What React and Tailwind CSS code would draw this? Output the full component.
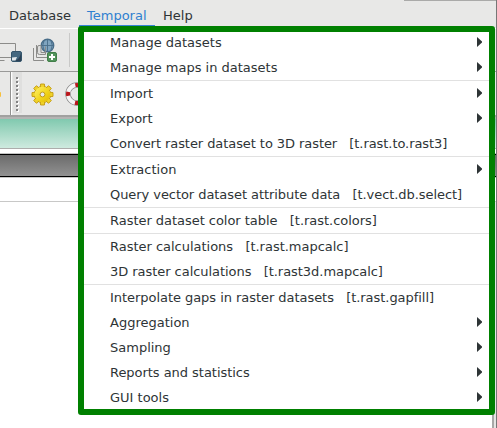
import React from "react";

const groups = [
  [
    { label: "Manage datasets", sub: true },
    { label: "Manage maps in datasets", sub: true },
  ],
  [
    { label: "Import", sub: true },
    { label: "Export", sub: true },
    { label: "Convert raster dataset to 3D raster   [t.rast.to.rast3]", tracking: "tracking-[-0.07px]" },
  ],
  [
    { label: "Extraction", sub: true },
    { label: "Query vector dataset attribute data   [t.vect.db.select]", tracking: "tracking-[-0.062px]" },
  ],
  [{ label: "Raster dataset color table   [t.rast.colors]", tracking: "tracking-[-0.035px]" }],
  [
    { label: "Raster calculations   [t.rast.mapcalc]", tracking: "tracking-[-0.02px]" },
    { label: "3D raster calculations   [t.rast3d.mapcalc]", tracking: "tracking-[-0.045px]" },
  ],
  [
    { label: "Interpolate gaps in raster datasets   [t.rast.gapfill]", tracking: "tracking-[-0.045px]" },
    { label: "Aggregation", sub: true },
    { label: "Sampling", sub: true },
    { label: "Reports and statistics", sub: true, tracking: "tracking-[-0.04px]" },
    { label: "GUI tools", sub: true },
  ],
];

function MenuItem({ label, sub, tracking = "" }) {
  return (
    <div className="flex h-[25px] items-center justify-between pl-[26px] pr-[7px]">
      <span className={`whitespace-pre ${tracking}`}>{label}</span>
      {sub && (
        <svg className="-mt-px" width="5" height="10" viewBox="0 0 5 10" fill="#2e3436">
          <path d="M0 0L5 4.5V5.5L0 10Z" />
        </svg>
      )}
    </div>
  );
}

function TemporalMenu() {
  return (
    <div className="absolute left-[78px] top-[26px] h-[389px] w-[417px] overflow-hidden rounded-[3px] border-[6px] border-[#008000] bg-white">
      <div className="-mt-0.5">
        {groups.map((items, i) => (
          <div key={i} className={i ? "border-t border-[#e1e1e1]" : ""}>
            {items.map((item) => (
              <MenuItem key={item.label} {...item} />
            ))}
          </div>
        ))}
      </div>
    </div>
  );
}

function NewLayerIcon() {
  return (
    <svg className="shrink-0" width="23" height="25" viewBox="0 0 23 25">
      <path d="M0 5.5H15.5V13M0 19.5H11M0 22.5H4.5" fill="none" stroke="#8c8c8a" />
      <rect x="11.5" y="13.5" width="10" height="10" rx="1.5" fill="#456880" stroke="#34546b" />
      <path d="M13 23C18 23 20 19 21 15V23Z" fill="#2c4155" />
      <path d="M12 19.5L17 19L15.5 22.5H12Z" fill="#e4e9ec" />
    </svg>
  );
}

function WebLayerIcon() {
  return (
    <svg className="shrink-0" width="25" height="25" viewBox="0 0 25 25">
      <path d="M0.5 10V22.5H11M3.5 7V19.5H14" fill="none" stroke="#8c8c8a" />
      <circle cx="14.5" cy="7.5" r="6.2" fill="#80a5c0" stroke="#486d89" strokeWidth="1.4" />
      <path d="M14.5 1V14M8 7.5H21M11 3Q8.5 7 11 12M18 3Q20.5 7 18 12" fill="none" stroke="#486d89" strokeWidth="0.9" />
      <path d="M12.5 8.5V16.5H6.5Q4.5 16.5 4.5 14.5V9Q4.5 7.5 6 7.5H8V14.5H12.5" fill="#dededd" stroke="#8c8c8a" />
      <rect x="14.5" y="14.5" width="9" height="9" rx="1.5" fill="#51935b" stroke="#417e48" />
      <path d="M19 16V22M16 19H22" stroke="#fff" strokeWidth="2" />
    </svg>
  );
}

function GearIcon() {
  const teeth = [0, 45, 90, 135, 180, 225, 270, 315];
  return (
    <svg className="shrink-0" width="23" height="23" viewBox="0 0 23 23">
      <defs>
        <linearGradient id="gold" x1="0" y1="0" x2="1" y2="1">
          <stop offset="0" stopColor="#fff16b" />
          <stop offset="0.55" stopColor="#f2d51d" />
          <stop offset="1" stopColor="#e0b800" />
        </linearGradient>
      </defs>
      <circle cx="11.5" cy="11.5" r="8.2" fill="none" stroke="#c39a10" />
      {teeth.map((a) => (
        <path key={a} d="M9.2 5L9.6 1H13.4L13.8 5Z" fill="#efd22a" stroke="#c39a10" strokeWidth="0.9" transform={`rotate(${a} 11.5 11.5)`} />
      ))}
      <circle cx="11.5" cy="11.5" r="7.8" fill="url(#gold)" />
      <circle cx="11.5" cy="11.5" r="2.4" fill="#e8e8e7" stroke="#b58a08" strokeWidth="0.8" />
    </svg>
  );
}

function HelpRingIcon() {
  return (
    <svg className="shrink-0" width="24" height="24" viewBox="0 0 24 24">
      <circle cx="12" cy="12" r="9" fill="none" stroke="#888" strokeWidth="5.4" />
      <circle cx="12" cy="12" r="9" fill="none" stroke="#f5f5f5" strokeWidth="4" />
      <circle cx="12" cy="12" r="9" fill="none" stroke="#b9161c" strokeWidth="4" strokeDasharray="4 10.137" strokeDashoffset="2" />
    </svg>
  );
}

function Grip() {
  return (
    <svg className="shrink-0" width="9" height="41" viewBox="0 0 9 41">
      <rect width="9" height="41" fill="#dfdfde" />
      {[5, 9, 13, 17, 21, 25, 29, 33, 37].map((y) => (
        <g key={y}>
          <rect x="4" y={y + 1} width="2" height="2" fill="#fff" />
          <rect x="3" y={y} width="2" height="2" fill="#828282" />
        </g>
      ))}
    </svg>
  );
}

export default function App() {
  return (
    <div className="relative flex h-[428px] w-[497px] overflow-hidden bg-white font-['DejaVu_Sans',sans-serif] text-[13px] leading-[16px] text-[#2e3436]">
      <div className="flex w-[496px] flex-col">
        <header className="flex h-[29px] shrink-0 border-b border-white bg-[#e8e8e7]">
          <span className="w-[79px] pl-[9px] pt-[8px]">Database</span>
          <span className="h-[27px] w-[76px] border-b-2 border-[#3584d6] pl-2 pt-[8px] text-[#2f80d0]">Temporal</span>
          <span className="pl-2 pt-[8px]">Help</span>
          <span className="ml-auto h-px w-[92px] bg-[#aaaaa9]" />
        </header>
        <div className="flex h-[42px] shrink-0 items-start bg-[#e8e8e7] pt-[9px]">
          <NewLayerIcon />
          <span className="w-[10px]" />
          <WebLayerIcon />
          <span className="-mt-[5px] ml-[11px] h-[34px] w-px bg-[#c9c9c8]" />
        </div>
        <div className="flex h-[44px] shrink-0 border-t border-[#999998] bg-[#e8e8e7]">
          <span className="mt-[20px] h-[5px] w-px rounded-r bg-[#f7c03c]" />
          <span className="ml-[9px] h-[43px] w-px bg-[#929291]" />
          <span className="h-[43px] w-px bg-white" />
          <span className="ml-px"><Grip /></span>
          <span className="ml-[9px] mt-[11px]"><GearIcon /></span>
          <span className="ml-[11px] mt-[10px]"><HelpRingIcon /></span>
        </div>
        <div className="h-[4px] shrink-0 border-t-2 border-[#a1a1a0] bg-[#b4b4b3]" />
        <div className="h-[30px] shrink-0 border-b border-[#adadac] bg-linear-to-b from-[#80c9af] to-[#ceeadf]" />
        <div className="h-[5px] shrink-0 border-b border-[#c4c4c3]" />
        <div className="h-[23px] shrink-0 border-y border-black bg-linear-to-b from-[#6b6b6b] to-[#929292]" />
        <div className="h-[25px] shrink-0 border-y border-[#c8c8c7]" />
        <div className="flex grow justify-end">
          <span className="w-[2px] bg-[#a8a8a7]" />
          <span className="w-[2px] bg-[#e5e5e4]" />
        </div>
      </div>
      <div className="w-px bg-[#777776]" />
      <TemporalMenu />
    </div>
  );
}
